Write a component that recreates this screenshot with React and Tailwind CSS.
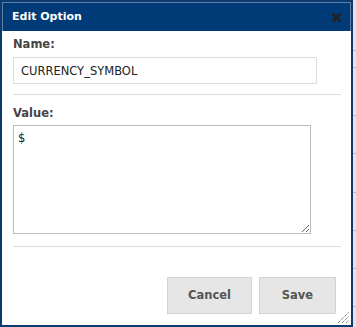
import React from "react";

const lineYs = [50, 67, 115, 153, 192, 230, 268, 306];

function Grip() {
  return (
    <svg width="14" height="12" viewBox="0 0 14 12" className="absolute right-[2px] bottom-[2px]">
      <g stroke="#555" strokeWidth="1" strokeDasharray="1 1">
        <line x1="3" y1="12" x2="14" y2="1" />
        <line x1="7" y1="12" x2="14" y2="5" />
        <line x1="11" y1="12" x2="14" y2="9" />
      </g>
    </svg>
  );
}

export default function App() {
  const font = { fontFamily: '"DejaVu Sans", Verdana, sans-serif' };
  return (
    <div className="flex w-[356px] h-[327px] bg-white" style={font}>
      <div className="relative flex flex-col w-[353px] h-[327px] border-2 border-[#0a3a6e] bg-white">
        <div className="flex items-center justify-between h-[29px] bg-[#003b78] border border-b-0 border-[#5d80a8] pl-[9px] pr-[9px]">
          <span className="text-[11px] font-bold text-white">Edit Option</span>
          <svg width="9" height="9" viewBox="0 0 9 9">
            <path d="M1 1 L8 8 M8 1 L1 8" stroke="#222" strokeWidth="2.6" strokeLinecap="square" />
          </svg>
        </div>
        <div className="flex flex-col pl-[11px] pr-[10px] pt-[5px]">
          <label className="text-[11.5px] leading-[16px] font-bold text-[#444]">Name:</label>
          <input
            readOnly
            value="CURRENCY_SYMBOL"
            className="mt-[5px] w-[304px] h-[27px] border border-[#ddd] px-[7px] text-[11.5px] text-[#222] outline-none"
            style={font}
          />
          <div className="mt-[10px] h-px bg-[#ddd]" />
          <label className="mt-[10px] text-[11.5px] leading-[16px] font-bold text-[#444]">Value:</label>
          <textarea
            readOnly
            value="$"
            className="mt-[4px] w-[298px] h-[109px] border border-[#bbb] px-[4px] py-[4px] text-[11.5px] text-[#222] outline-none"
            style={font}
          />
          <div className="mt-[12px] h-px bg-[#ddd]" />
          <div className="flex justify-end gap-[7px] mt-[30px] pr-[5px]">
            <button className="w-[85px] h-[37px] bg-[#e6e6e6] border border-[#d3d3d3] text-[11.5px] font-bold text-[#555]">Cancel</button>
            <button className="w-[77px] h-[37px] bg-[#e6e6e6] border border-[#d3d3d3] text-[11.5px] font-bold text-[#555]">Save</button>
          </div>
        </div>
        <Grip />
      </div>
      <div className="relative w-[3px] h-[327px] bg-[#e4e4e4]">
        {lineYs.map((y) => (
          <div key={y} className="absolute left-0 w-[3px] h-px bg-[#bcbcbc]" style={{ top: y }} />
        ))}
      </div>
    </div>
  );
}
